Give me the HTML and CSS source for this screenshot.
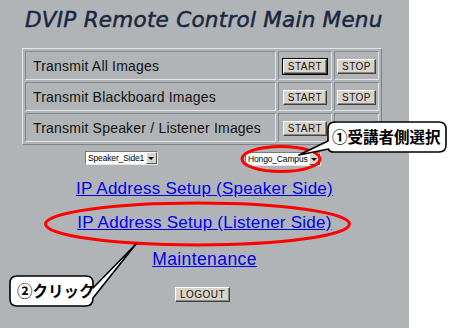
FILE: index.html
```html
<!DOCTYPE html>
<html lang="en">
<head>
  <meta charset="UTF-8">
  <title>DVIP Remote Control Main Menu</title>
  <link rel="stylesheet" href="styles.css">
</head>
<body>

  <div class="page">
    <h1 class="title">DVIP Remote Control Main Menu</h1>

    <!-- Transmit controls -->
    <table class="menu">
      <tr>
        <td class="label">Transmit All Images</td>
        <td class="ctrl"><button class="btn default">START</button></td>
        <td class="ctrl"><button class="btn">STOP</button></td>
      </tr>
      <tr>
        <td class="label">Transmit Blackboard Images</td>
        <td class="ctrl"><button class="btn">START</button></td>
        <td class="ctrl"><button class="btn">STOP</button></td>
      </tr>
      <tr>
        <td class="label">Transmit Speaker / Listener Images</td>
        <td class="ctrl"><button class="btn">START</button></td>
        <td class="ctrl"><button class="btn">STOP</button></td>
      </tr>
    </table>

    <!-- Site selection -->
    <div class="sites">
      <span class="select speaker"><span class="value">Speaker_Side1</span><span class="arrow"></span></span>
      <span class="select listener"><span class="value">Hongo_Campus</span><span class="arrow"></span></span>
    </div>

    <div class="links">
      <a href="#" class="link">IP Address Setup (Speaker Side)</a>
      <a href="#" class="link">IP Address Setup (Listener Side)</a>
      <a href="#" class="link maint">Maintenance</a>
    </div>

    <div class="bottom">
      <button class="btn logout">LOGOUT</button>
    </div>

    <!-- Annotations drawn over the page -->
    <svg class="notes" width="450" height="328" viewBox="0 0 450 328">
      <ellipse cx="281" cy="159" rx="39" ry="12.5" fill="none" stroke="#ff0000" stroke-width="3"/>
      <ellipse cx="197.5" cy="224" rx="152" ry="21" fill="none" stroke="#ff0000" stroke-width="3"/>
      <path d="M335 122 H439 Q446 122 446 129 V145 Q446 152 439 152 H334 Q329 152 328.5 149 L299 155 L328 141 V129 Q328 122 335 122 Z"
            fill="#fff" stroke="#000" stroke-width="1.6" stroke-linejoin="round"/>
      <path d="M17 276 H86 Q93 276 93 283 V288 L136 244 L93 298 Q93 306 86 306 H17 Q10 306 10 299 V283 Q10 276 17 276 Z"
            fill="#fff" stroke="#000" stroke-width="1.6" stroke-linejoin="round"/>
    </svg>
    <div class="callout first">①受講者側選択</div>
    <div class="callout second">②クリック</div>
  </div>

</body>
</html>
```

FILE: styles.css
```css
* {
  box-sizing: border-box;
}

body {
  margin: 0;
  padding: 0;
  background: #ffffff;
  font-family: 'Liberation Sans', Arial, sans-serif;
}

.page {
  position: relative;
  width: 409px;
  height: 328px;
  background: #b1b4b7;
  padding-top: 7px;
}

.title {
  margin: 0 0 0 25px;
  font-family: 'DejaVu Sans', Verdana, sans-serif;
  font-style: italic;
  font-weight: normal;
  font-size: 21.5px;
  line-height: 26px;
  color: #1c2640;
  -webkit-text-stroke: 0.5px #1c2640;
  letter-spacing: 0.25px;
}

/* Transmit table */
.menu {
  margin: 15px 0 0 22px;
  width: 360px;
  border-collapse: separate;
  border-spacing: 2px;
  border: 1px solid;
  border-color: #e2e4e6 #808386 #808386 #e2e4e6;
}

.menu td {
  height: 29px;
  padding: 0;
  border: 1px solid;
  border-color: #85888b #e2e4e6 #e2e4e6 #85888b;
}

.menu .label {
  width: 251px;
  padding-left: 7px;
  font-size: 14px;
  letter-spacing: 0.2px;
  color: #111;
}

.menu .ctrl {
  text-align: center;
}

.menu td.ctrl:nth-child(2) {
  width: 54px;
}

.menu td.ctrl:nth-child(3) {
  width: 45px;
}

.btn {
  font-family: 'Liberation Sans', Arial, sans-serif;
  font-size: 10px;
  letter-spacing: 0.5px;
  color: #111;
  background: #d8d4cc;
  height: 15px;
  padding: 0 4px;
  line-height: 11px;
  border: 1px solid;
  border-color: #ffffff #404040 #404040 #ffffff;
  box-shadow: inset -1px -1px 0 #8a8780;
  vertical-align: middle;
  margin: 0;
}

.btn.default {
  outline: 1px solid #000;
}

/* Selects */
.sites {
  display: flex;
  align-items: flex-start;
  margin-top: 6px;
  height: 16px;
}

.select {
  display: flex;
  height: 14px;
  background: #fff;
  border: 1px solid;
  border-color: #7a7a7a #e6e6e6 #e6e6e6 #7a7a7a;
  font-size: 8.5px;
  letter-spacing: -0.15px;
  line-height: 12px;
  color: #000;
  overflow: hidden;
}

.select .value {
  flex: 1;
  padding-left: 2px;
  white-space: nowrap;
}

.select .arrow {
  position: relative;
  flex: none;
  width: 11px;
  background: #d8d4cc;
  border: 1px solid;
  border-color: #fff #555 #555 #fff;
}

.select .arrow::after {
  content: '';
  position: absolute;
  left: 1px;
  top: 4px;
  border-left: 3px solid transparent;
  border-right: 3px solid transparent;
  border-top: 3px solid #000;
}

.select.speaker {
  width: 73px;
  margin-left: 85px;
}

.select.listener {
  width: 76px;
  margin-left: 87px;
  margin-top: 1px;
}

/* Links */
.links {
  display: flex;
  flex-direction: column;
  align-items: center;
  margin-top: 12px;
}

.link {
  font-size: 17px;
  line-height: 20px;
  color: #0000ee;
  letter-spacing: 0.25px;
  margin-bottom: 14px;
}

.link.maint {
  font-size: 17.5px;
  margin-top: 2px;
  letter-spacing: 0.4px;
}

.bottom {
  text-align: center;
  margin-top: 2px;
  padding-right: 4px;
}

.logout {
  padding: 0 4px;
}

/* Annotations */
.notes {
  position: absolute;
  left: 0;
  top: 0;
  pointer-events: none;
}

.callout {
  position: absolute;
  font-family: 'Noto Sans CJK JP', sans-serif;
  font-weight: bold;
  font-size: 15.5px;
  line-height: 20px;
  color: #000;
  white-space: nowrap;
}

.callout.first {
  left: 332px;
  top: 126px;
}

.callout.second {
  left: 17px;
  top: 280px;
}
```
